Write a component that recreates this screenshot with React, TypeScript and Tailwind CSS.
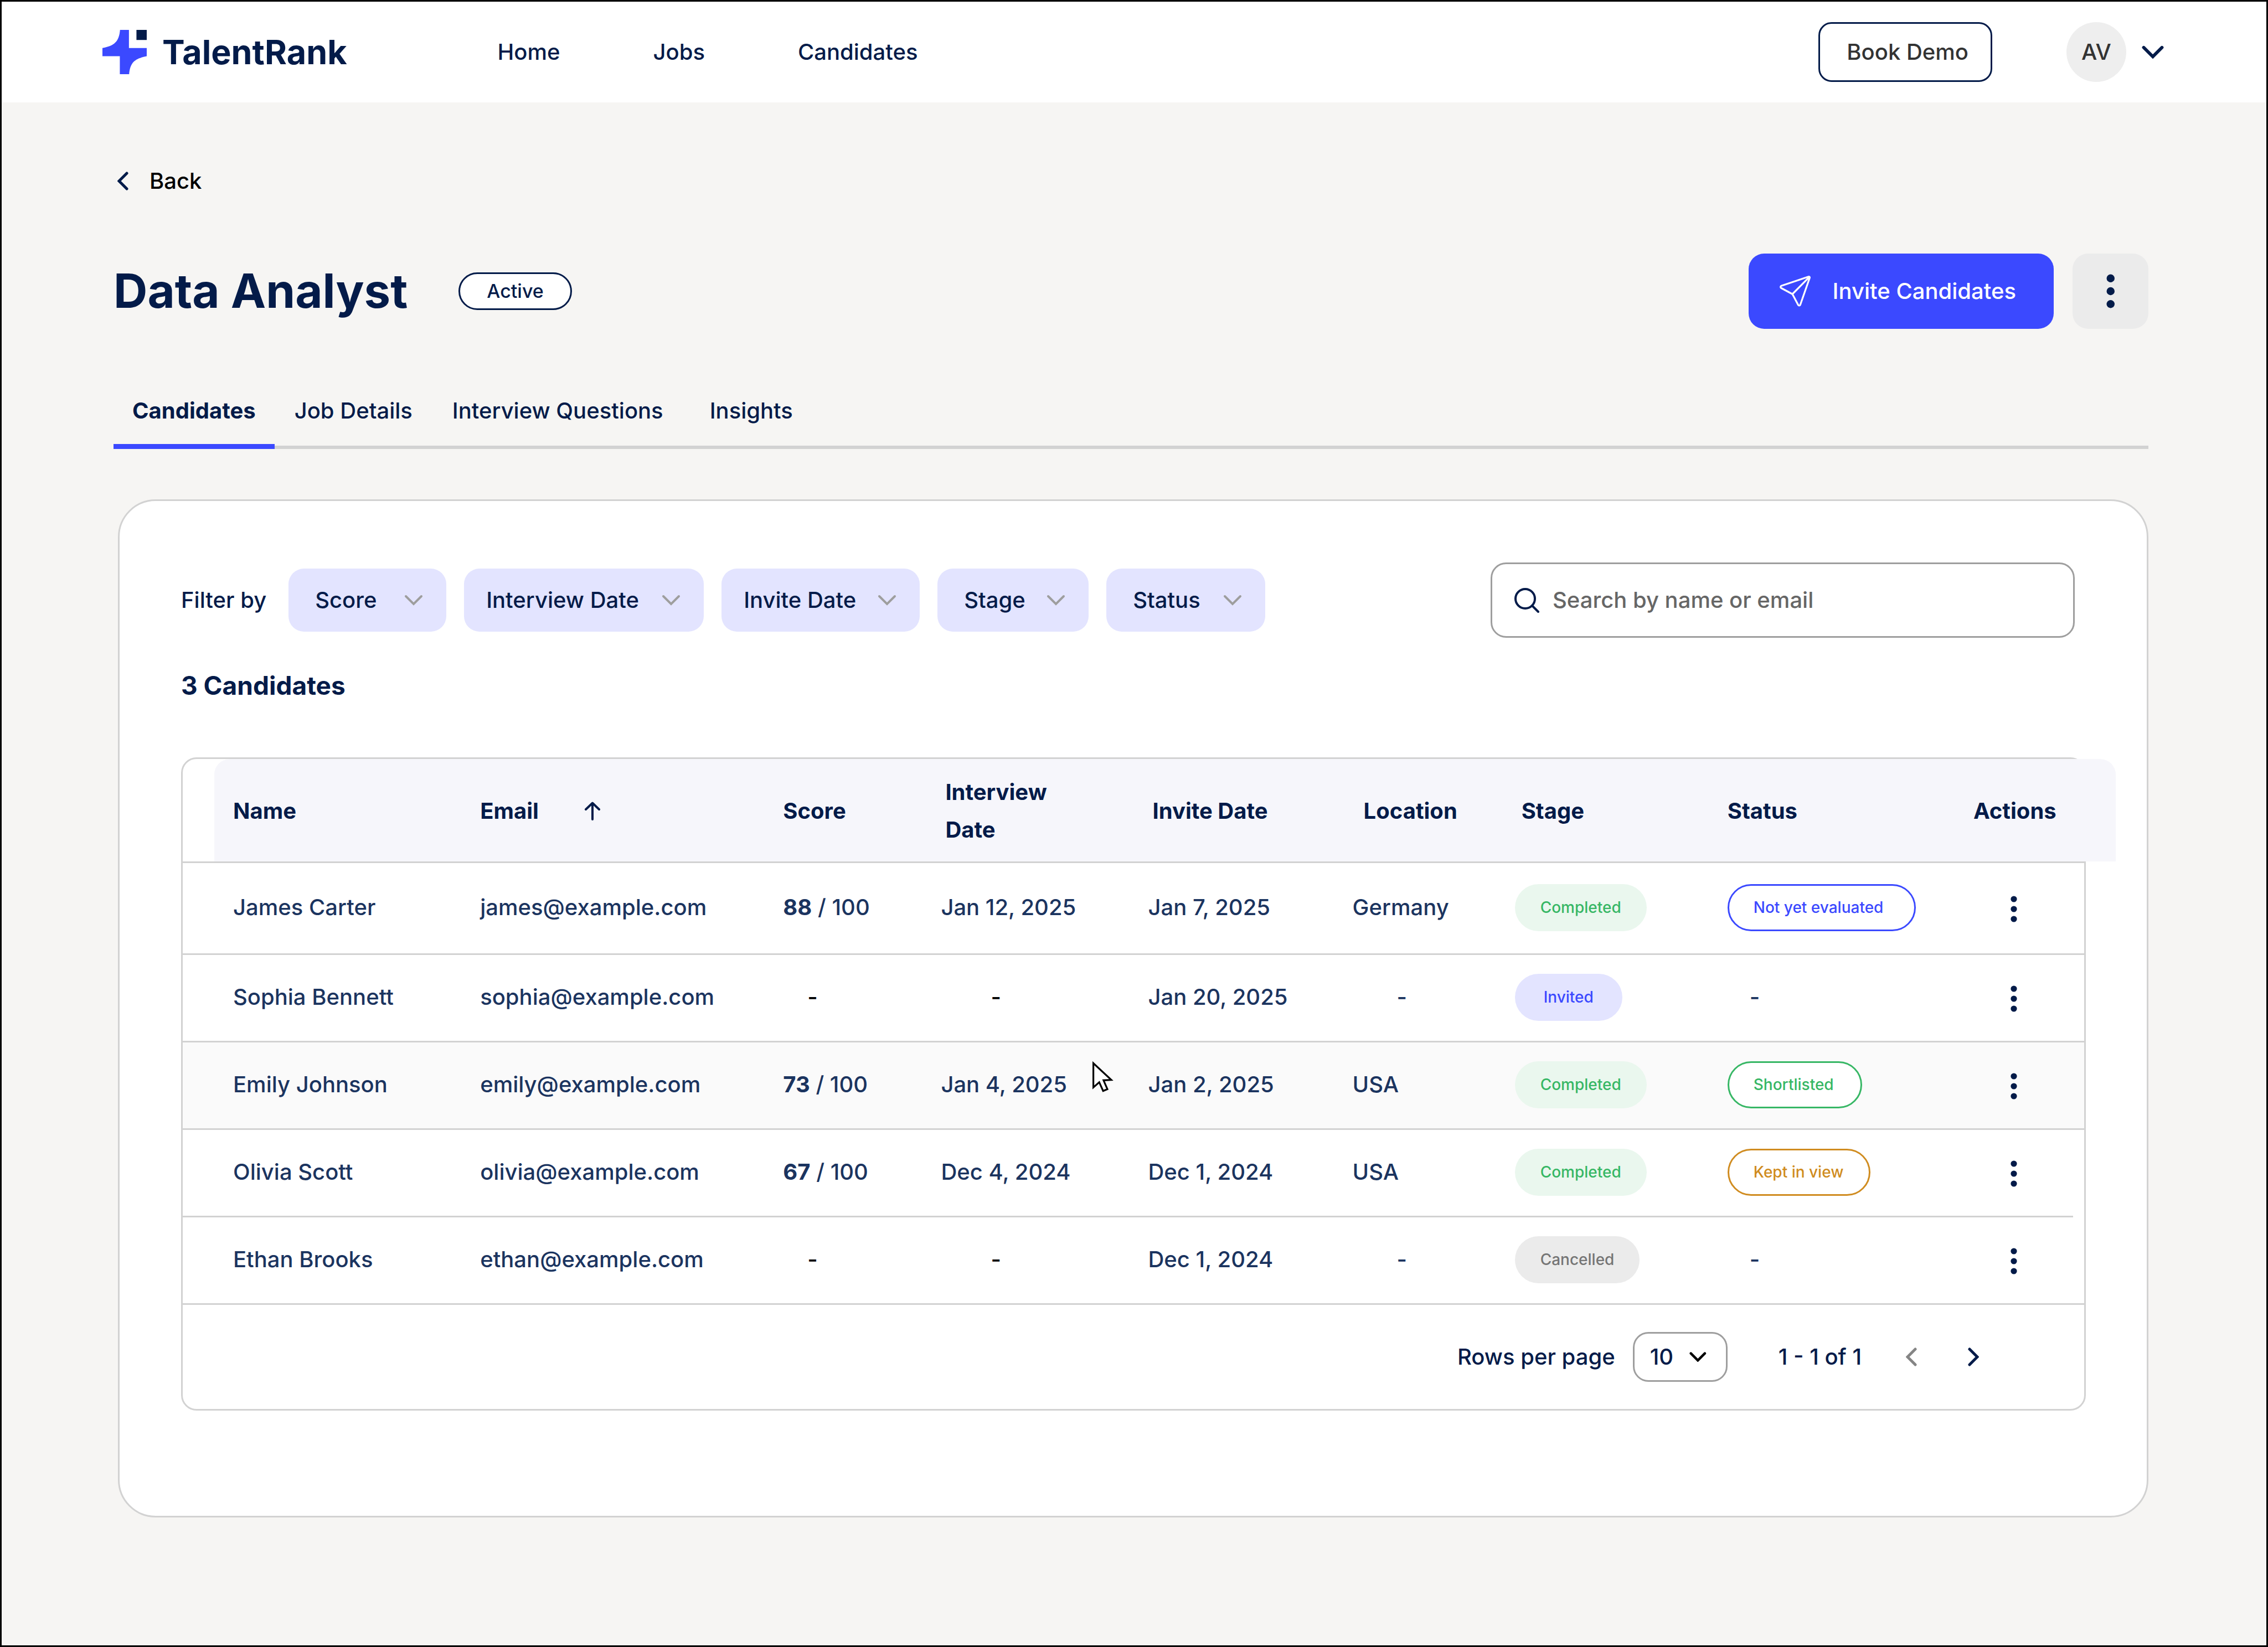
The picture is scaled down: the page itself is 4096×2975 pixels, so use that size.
import type { ReactNode } from "react";

type Stage = "Completed" | "Invited" | "Cancelled";
type Status = "Not yet evaluated" | "Shortlisted" | "Kept in view";

type Candidate = {
  name: string;
  email: string;
  score?: number;
  interviewDate?: string;
  inviteDate: string;
  location?: string;
  stage: Stage;
  status?: Status;
};

const navLinks = ["Home", "Jobs", "Candidates"];

const tabs = [
  { label: "Candidates", pad: "px-[34px]" },
  { label: "Job Details", pad: "px-9" },
  { label: "Interview Questions", pad: "px-9" },
  { label: "Insights", pad: "px-12" },
];

const filters = [
  { label: "Score", size: "w-[285px] pl-12" },
  { label: "Interview Date", size: "w-[433px] pl-10" },
  { label: "Invite Date", size: "w-[358px] pl-10" },
  { label: "Stage", size: "w-[273px] pl-12" },
  { label: "Status", size: "w-[287px] pl-12" },
];

const candidates: Candidate[] = [
  {
    name: "James Carter",
    email: "james@example.com",
    score: 88,
    interviewDate: "Jan 12, 2025",
    inviteDate: "Jan 7, 2025",
    location: "Germany",
    stage: "Completed",
    status: "Not yet evaluated",
  },
  {
    name: "Sophia Bennett",
    email: "sophia@example.com",
    inviteDate: "Jan 20, 2025",
    stage: "Invited",
  },
  {
    name: "Emily Johnson",
    email: "emily@example.com",
    score: 73,
    interviewDate: "Jan 4, 2025",
    inviteDate: "Jan 2, 2025",
    location: "USA",
    stage: "Completed",
    status: "Shortlisted",
  },
  {
    name: "Olivia Scott",
    email: "olivia@example.com",
    score: 67,
    interviewDate: "Dec 4, 2024",
    inviteDate: "Dec 1, 2024",
    location: "USA",
    stage: "Completed",
    status: "Kept in view",
  },
  {
    name: "Ethan Brooks",
    email: "ethan@example.com",
    inviteDate: "Dec 1, 2024",
    stage: "Cancelled",
  },
];

const stageStyles: Record<Stage, string> = {
  Completed: "bg-[#eaf7ee] px-[46px] text-[#37b765]",
  Invited: "bg-[#e3e4ff] px-[52px] text-[#3b49ff]",
  Cancelled: "bg-[#ebebeb] px-[46px] text-[#757575]",
};

const statusStyles: Record<Status, string> = {
  "Not yet evaluated": "border-[#3b49ff] pr-14 text-[#3b49ff]",
  Shortlisted: "border-[#37b765] pr-12 text-[#37b765]",
  "Kept in view": "border-[#d08c20] pr-[46px] text-[#d08c20]",
};

const Chevron = ({ className, d, box, stroke }: { className: string; d: string; box: string; stroke: number }) => (
  <svg
    viewBox={box}
    fill="none"
    stroke="currentColor"
    strokeWidth={stroke}
    strokeLinecap="round"
    className={className}
    aria-hidden="true"
  >
    <path d={d} />
  </svg>
);

const ChevronDown = ({ className, stroke = 4 }: { className: string; stroke?: number }) => (
  <Chevron className={className} d="M3 3 17 17 31 3" box="0 0 34 20" stroke={stroke} />
);

const Kebab = ({ className }: { className: string }) => (
  <svg viewBox="0 0 12 48" fill="currentColor" className={className} aria-hidden="true">
    <circle cx="6" cy="6" r="5.6" />
    <circle cx="6" cy="24" r="5.6" />
    <circle cx="6" cy="42" r="5.6" />
  </svg>
);

const PaperPlane = () => (
  <svg
    viewBox="0 0 80 80"
    fill="none"
    stroke="currentColor"
    strokeWidth="4.6"
    strokeLinejoin="round"
    className="size-14"
    aria-hidden="true"
  >
    <path d="M74.500 2.500 4.500 26.200c-2.600.9-2.900 4.300-.5 5.600L33 47.500 47.800 75.500c1.300 2.400 4.700 2.100 5.500-.5L77.500 5.500c.7-1.900-1.100-3.700-3-3ZM33 47.500 76 4" />
  </svg>
);

const SearchIcon = () => (
  <svg
    viewBox="0 0 45 45"
    fill="none"
    stroke="currentColor"
    strokeWidth="4"
    strokeLinecap="round"
    className="size-[45px]"
    aria-hidden="true"
  >
    <circle cx="19.500" cy="19.500" r="17.500" />
    <path d="m32 32 11 11" />
  </svg>
);

const Logo = () => (
  <a href="#" className="flex items-center gap-7">
    <svg viewBox="0 0 112 112" className="size-20" aria-hidden="true">
      <path
        d="M44.500 0H67v46h45v20.500C82 72.500 70 82 67.500 112H44V66.500H0V46C30 40 42 30 44.500 0Z"
        fill="#3b49ff"
      />
      <path d="M86 0h26v25.500H86Z" fill="#031b49" />
    </svg>
    <span className="text-[61px] leading-[72px] font-bold">TalentRank</span>
  </a>
);

const Header = () => (
  <header className="flex h-[182px] items-center bg-white pr-[185px] pl-[182px]">
    <Logo />
    <nav className="ml-[272px] flex gap-[168px]">
      {navLinks.map((link) => (
        <a key={link} href="#">
          {link}
        </a>
      ))}
    </nav>
    <div className="ml-auto flex items-center">
      <button className="h-[108px] rounded-3xl border-3 border-[#031b49] pr-10 pl-12 text-[#333]">
        Book Demo
      </button>
      <button className="ml-[134px] flex items-center gap-7" aria-label="Account menu">
        <span className="flex size-[108px] items-center justify-center rounded-full bg-[#eee] text-[#333]">
          AV
        </span>
        <ChevronDown className="h-6 w-10" stroke={5} />
      </button>
    </div>
  </header>
);

const PageTitle = () => (
  <div className="mt-[103px] flex h-[136px] items-center">
    <h1 className="text-[85px] leading-[104px] font-bold">Data Analyst</h1>
    <span className="ml-[92px] flex h-[68px] items-center rounded-full border-3 border-[#031b49] bg-white px-12 text-[34px]">
      Active
    </span>
    <button className="ml-auto flex h-full items-center gap-10 rounded-[28px] bg-[#3b49ff] pr-[68px] pl-14 text-white">
      <PaperPlane />
      Invite Candidates
    </button>
    <button
      className="ml-[34px] flex h-full w-[137px] items-center justify-center rounded-[28px] bg-[#ebebeb]"
      aria-label="Job actions"
    >
      <Kebab className="h-[62px]" />
    </button>
  </div>
);

const Tabs = () => (
  <nav className="mt-[120px] flex border-b-6 border-[#d2d2d2]">
    {tabs.map((tab, i) => (
      <button
        key={tab.label}
        className={`-mb-[6px] border-b-9 pb-8 ${tab.pad} ${
          i === 0 ? "border-[#3b49ff] font-bold" : "border-transparent"
        }`}
      >
        {tab.label}
      </button>
    ))}
  </nav>
);

const FilterBar = () => (
  <div className="flex items-center pr-5">
    <span>Filter by</span>
    <div className="ml-10 flex gap-8">
      {filters.map((filter) => (
        <label key={filter.label} className="relative">
          <select
            aria-label={`Filter by ${filter.label}`}
            className={`h-[114px] appearance-none rounded-[28px] bg-[#e3e4ff] ${filter.size}`}
          >
            <option>{filter.label}</option>
          </select>
          <ChevronDown className="pointer-events-none absolute top-1/2 right-[42px] h-5 -translate-y-1/2 text-[#9e9e9e]" />
        </label>
      ))}
    </div>
    <label className="ml-auto flex h-[136px] w-[1055px] items-center gap-6 rounded-[28px] border-3 border-[#9e9e9e] pl-10">
      <SearchIcon />
      <input
        type="search"
        aria-label="Search candidates"
        placeholder="Search by name or email"
        className="min-w-0 flex-1 outline-none placeholder:text-[#666]"
      />
    </label>
  </div>
);

const Dash = ({ className }: { className: string }) => <span className={className}>-</span>;

const Cursor = () => (
  <svg viewBox="0 0 54 80" className="absolute top-[34px] left-[274px] h-14" aria-hidden="true">
    <path
      d="M2.300 5V67.500L17.500 54 27.500 76.500 38.500 72 28.500 49 48.500 48Z"
      fill="#fff"
      stroke="#000"
      strokeWidth="4.6"
      strokeLinejoin="miter"
    />
  </svg>
);

// The rule under each row is its own strip, so it can stop short of the frame
const RowRule = ({ className = "right-0" }: { className?: string }) => (
  <span className={`absolute bottom-0 left-0 h-[3px] bg-[#d2d2d2] ${className}`} />
);

const Th = ({ children, className = "" }: { children: ReactNode; className?: string }) => (
  <th scope="col" className={`p-0 text-left leading-[68px] font-bold ${className}`}>
    {children}
  </th>
);

const CandidateTable = () => (
  <table className="w-full table-fixed">
    <colgroup>
      <col className="w-[537px]" />
      <col className="w-[547px]" />
      <col className="w-[285px]" />
      <col className="w-[374px]" />
      <col className="w-[369px]" />
      <col className="w-[293px]" />
      <col className="w-[384px]" />
      <col className="w-[420px]" />
      <col className="w-[224px]" />
    </colgroup>
    <thead>
      <tr className="relative h-[188px]">
        <Th className="pl-[91px]">
          <span className="absolute top-0 -right-[57px] bottom-[3px] left-[57px] -z-10 rounded-t-[28px] bg-[#f6f6fb]" />
          Name
          <RowRule />
        </Th>
        <Th>
          <button className="flex items-center gap-[82px]">
            Email
            <svg
              viewBox="0 0 30 34"
              fill="none"
              stroke="currentColor"
              strokeWidth="4"
              strokeLinecap="round"
              strokeLinejoin="round"
              className="h-[34px]"
              aria-hidden="true"
            >
              <path d="M15 32V3M3 14 15 2.500 27 14" />
            </svg>
          </button>
        </Th>
        <Th>Score</Th>
        <Th className="pr-28 pl-2">Interview Date</Th>
        <Th className="pl-2">Invite Date</Th>
        <Th className="pl-5">Location</Th>
        <Th className="pl-3">Stage</Th>
        <Th>Status</Th>
        <Th className="pl-6">Actions</Th>
      </tr>
    </thead>
    <tbody className="text-[#1b345f] [&_td]:pb-1.5">
      {candidates.map((c, i) => (
        <tr
          key={c.email}
          className={`relative ${i === 0 ? "h-[166px]" : "h-[158px]"} ${i === 2 ? "bg-[#fafafa]" : ""}`}
        >
          <td className="pl-[91px]">
            {c.name}
            <RowRule className={i === 3 ? "right-5" : "right-0"} />
          </td>
          <td>{c.email}</td>
          <td>
            {c.score ? (
              <>
                <b>{c.score}</b> / 100
              </>
            ) : (
              <Dash className="pl-11 text-black" />
            )}
          </td>
          <td className="relative">
            {c.interviewDate ?? <Dash className="pl-[90px] text-black" />}
            {i === 2 && <Cursor />}
          </td>
          <td>{c.inviteDate}</td>
          <td>{c.location ?? <Dash className="pl-20" />}</td>
          <td>
            <span className={`inline-flex h-[85px] items-center rounded-full align-middle text-[28px] ${stageStyles[c.stage]}`}>
              {c.stage}
            </span>
          </td>
          <td>
            {c.status ? (
              <span
                className={`inline-flex h-[85px] items-center rounded-full border-3 bg-white pl-11 align-middle text-[28px] ${statusStyles[c.status]}`}
              >
                {c.status}
              </span>
            ) : (
              <Dash className="pl-10" />
            )}
          </td>
          <td className="pr-[30px] text-center">
            <button className="align-middle text-[#031b49]" aria-label={`Actions for ${c.name}`}>
              <Kebab className="h-12" />
            </button>
          </td>
        </tr>
      ))}
    </tbody>
  </table>
);

const Pagination = () => (
  <div className="flex h-[188px] items-center justify-end pr-[190px]">
    <label htmlFor="rows-per-page">Rows per page</label>
    <div className="relative ml-8">
      <select
        id="rows-per-page"
        className="h-[90px] w-[171px] appearance-none rounded-[28px] border-3 border-[#9e9e9e] bg-white pl-7"
      >
        <option>10</option>
      </select>
      <ChevronDown
        className="pointer-events-none absolute top-1/2 right-[38px] h-[18px] -translate-y-1/2 text-black"
        stroke={5}
      />
    </div>
    <span className="ml-[92px]">1 - 1 of 1</span>
    <button className="ml-20 text-[#858585]" aria-label="Previous page">
      <Chevron className="h-[34px]" d="M17 3 3 17 17 31" box="0 0 20 34" stroke={5} />
    </button>
    <button className="ml-[92px]" aria-label="Next page">
      <Chevron className="h-[34px]" d="M3 3 17 17 3 31" box="0 0 20 34" stroke={5} />
    </button>
  </div>
);

const App = () => (
  <div className="min-h-screen border-3 border-black bg-[#f6f5f3] font-['Inter',sans-serif] text-[40px] leading-[56px] font-medium text-[#031b49]">
    <Header />
    <main className="pt-[114px] pr-[213px] pb-[231px] pl-[202px]">
      <a href="#" className="ml-[7px] flex w-fit items-center gap-[38px] text-black">
        <Chevron className="h-[34px] text-[#031b49]" d="M17 3 3 17 17 31" box="0 0 20 34" stroke={5} />
        Back
      </a>
      <PageTitle />
      <Tabs />
      <section className="mt-[91px] ml-2 rounded-[68px] border-3 border-[#d2d2d2] bg-white pt-[111px] pr-[110px] pb-[190px] pl-[111px]">
        <FilterBar />
        <h2 className="mt-[58px] text-[46px] font-bold">3 Candidates</h2>
        <div className="isolate mt-[102px] rounded-[28px] border-3 border-[#d2d2d2]">
          <CandidateTable />
          <Pagination />
        </div>
      </section>
    </main>
  </div>
);

export default App;
